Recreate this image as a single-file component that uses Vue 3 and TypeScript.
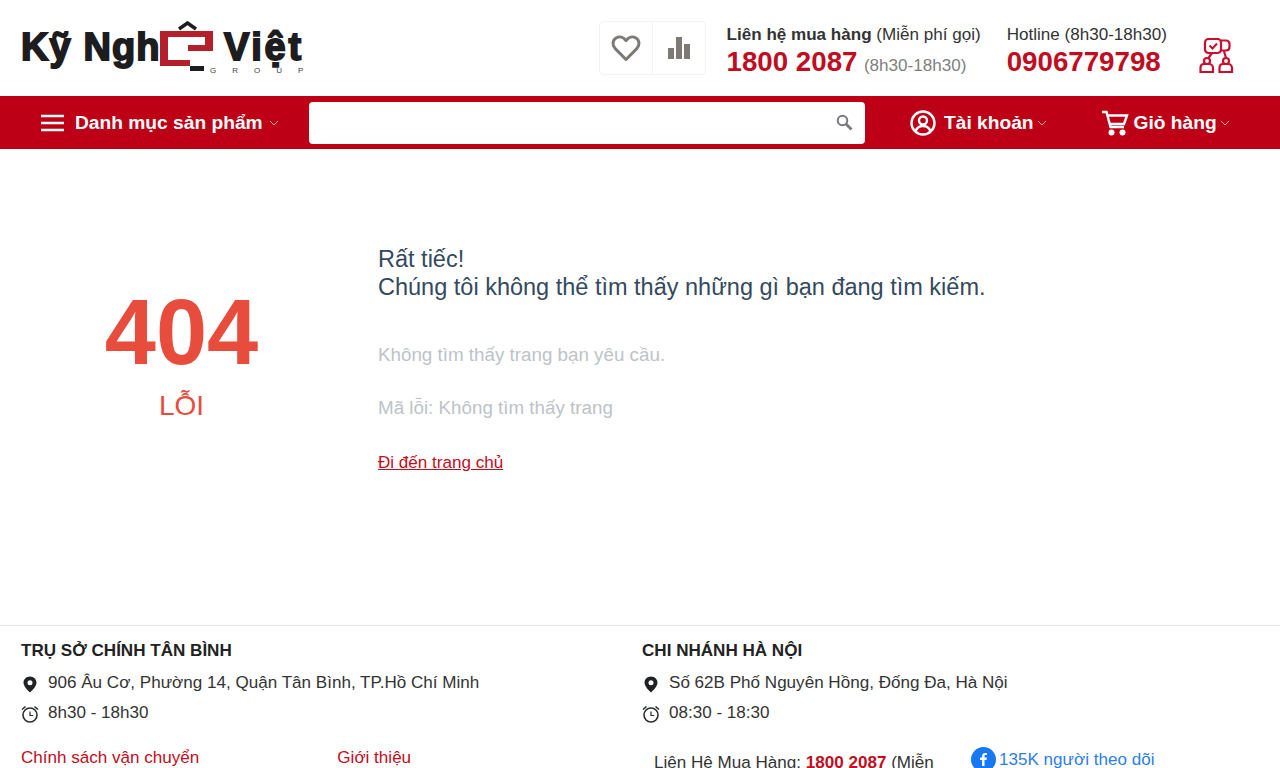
<template>
  <div class="page">
    <header class="top">
      <a class="logo" href="#">
        <span class="logo__word">Kỹ Ngh</span>
        <svg class="logo__mark" width="63" height="54" viewBox="0 0 63 54">
          <path d="M20 8 28.500 2 37 8" fill="none" stroke="#1d1d1f" stroke-width="3.500" />
          <path d="M1 10H54V30H29V24H46V16H9V39H31V45H1Z" fill="#b3202c" />
          <rect x="31" y="45" width="14" height="5" fill="#1d1d1f" />
        </svg>
        <span class="logo__side">
          <span class="logo__word logo__word--side">Việt</span>
          <span class="logo__group">GROUP</span>
        </span>
      </a>

      <div class="top__right">
        <div class="tools">
          <a class="tools__btn" href="#">
            <svg width="30" height="28" viewBox="0 0 30 28">
              <path d="M15 25.500 4.200 14.600C.9 11.200 1.500 6.300 5 4 8.500 1.900 12.600 3 15 6.600 17.400 3 21.500 1.900 25 4c3.500 2.300 4.100 7.200.8 10.600Z" fill="none" stroke="#7d7a75" stroke-width="3" stroke-linejoin="round" />
            </svg>
          </a>
          <a class="tools__btn" href="#">
            <svg width="22" height="22" viewBox="0 0 22 22">
              <rect x="0" y="11" width="6" height="11" fill="#7d7a75" />
              <rect x="8" y="0" width="6" height="22" fill="#7d7a75" />
              <rect x="16" y="7" width="6" height="15" fill="#7d7a75" />
            </svg>
          </a>
        </div>

        <div class="contact contact--first">
          <div class="contact__label"><b>Liên hệ mua hàng</b> (Miễn phí gọi)</div>
          <div><a class="contact__phone" href="#">1800 2087</a> <span class="contact__hours">(8h30-18h30)</span></div>
        </div>
        <div class="contact contact--second">
          <div class="contact__label">Hotline (8h30-18h30)</div>
          <a class="contact__phone" href="#">0906779798</a>
        </div>

        <svg class="support" width="36" height="36" viewBox="0 0 36 36" fill="none" stroke="#c8102e" stroke-width="2.200">
          <path d="M22 2.500h5c2 0 3.500 1.500 3.500 3.500v3c0 2-1.500 3.500-3.500 3.500h-5" />
          <rect x="6" y="1" width="16" height="14" rx="3.500" />
          <path d="M10.500 7.500l3 3 4.500-5" stroke-width="2" />
          <circle cx="8" cy="23" r="3" />
          <circle cx="27" cy="23" r="3" />
          <path d="M1.500 34v-4c0-2.500 1.500-4 3.500-4h5c2 0 4 1.500 4 4v4ZM20.500 34v-4c0-2.500 1.500-4 3.500-4h5c2 0 4 1.500 4 4v4Z" />
          <path d="M13 15l-3.500 5M25 13l2 7" />
        </svg>
      </div>
    </header>

    <nav class="nav">
      <a class="nav__item nav__menu" href="#">
        <svg width="24" height="18" viewBox="0 0 24 18"><path d="M0 2h23M0 9h23M0 16h23" stroke="#fff" stroke-width="2.600" /></svg>
        <span>Danh mục sản phẩm</span>
        <svg class="chev" width="10" height="6" viewBox="0 0 10 6"><path d="M1 1l4 4 4-4" /></svg>
      </a>

      <div class="search">
        <svg width="17" height="17" viewBox="0 0 17 17" fill="none" stroke="#77797c">
          <circle cx="6.500" cy="6.500" r="4.800" stroke-width="2" />
          <path d="M10 10l5.500 5.500" stroke-width="2.800" />
        </svg>
      </div>

      <a class="nav__item nav__account" href="#">
        <svg width="26" height="26" viewBox="0 0 26 26" fill="none" stroke="#fff" stroke-width="2.400">
          <circle cx="13" cy="13" r="11.500" />
          <circle cx="13" cy="10.500" r="4" />
          <path d="M5.500 21c1.500-3.500 4-5 7.500-5s6 1.500 7.500 5" />
        </svg>
        <span>Tài khoản</span>
        <svg class="chev" width="10" height="6" viewBox="0 0 10 6"><path d="M1 1l4 4 4-4" /></svg>
      </a>

      <a class="nav__item nav__cart" href="#">
        <svg width="28" height="26" viewBox="0 0 28 26" fill="none" stroke="#fff" stroke-width="2.400">
          <path d="M1 2h4.500l4 15h13.500" />
          <path d="M6.500 5.500H26l-3 8.500H9" />
          <circle cx="10.500" cy="22.500" r="1.800" fill="#fff" />
          <circle cx="21.500" cy="22.500" r="1.800" fill="#fff" />
        </svg>
        <span>Giỏ hàng</span>
        <svg class="chev" width="10" height="6" viewBox="0 0 10 6"><path d="M1 1l4 4 4-4" /></svg>
      </a>
    </nav>

    <main class="error">
      <div class="error__code">
        <strong>404</strong>
        <span>LỖI</span>
      </div>
      <div class="error__body">
        <h1>Rất tiếc!<br />Chúng tôi không thể tìm thấy những gì bạn đang tìm kiếm.</h1>
        <p>Không tìm thấy trang bạn yêu cầu.</p>
        <p>Mã lỗi: Không tìm thấy trang</p>
        <a href="#">Đi đến trang chủ</a>
      </div>
    </main>

    <footer class="foot">
      <section v-for="office in offices" :key="office.title" class="office">
        <h3>{{ office.title }}</h3>
        <div class="office__row">
          <svg width="18" height="18" viewBox="0 0 18 18">
            <path fill-rule="evenodd" d="M9 1.500C5.400 1.500 2.500 4.300 2.500 7.800 2.500 12 9 17.500 9 17.500S15.500 12 15.500 7.800C15.500 4.300 12.600 1.500 9 1.500ZM9 5.300A2.500 2.500 0 1 1 9 10.300 2.500 2.500 0 0 1 9 5.300Z" fill="#1f2326" />
          </svg>
          <span>{{ office.address }}</span>
        </div>
        <div class="office__row">
          <svg class="clock" width="18" height="18" viewBox="0 0 18 18" fill="none" stroke="#2a2e31" stroke-width="1.600">
            <circle cx="9" cy="10" r="7" />
            <path d="M9 6.500V10.500H12.200" stroke-width="1.200" />
            <path d="M1 4.500 4.500 1.500M17 4.500 13.500 1.500" />
          </svg>
          <span>{{ office.hours }}</span>
        </div>
      </section>

      <section class="foot__links">
        <a href="#">Chính sách vận chuyển</a>
        <a href="#">Giới thiệu</a>
      </section>

      <section class="foot__extra">
        <div class="foot__call">Liên Hệ Mua Hàng: <b>1800 2087</b> (Miễn</div>
        <a class="foot__fb" href="#">
          <svg width="25" height="25" viewBox="0 0 25 25">
            <circle cx="12.500" cy="12.500" r="12.500" fill="#1877f2" />
            <path d="M13.500 19v-6h2l.4-2.400h-2.400V9.300c0-.8.3-1.200 1.200-1.200h1.200V6c-.5-.1-1.100-.1-1.700-.1-1.900 0-3.100 1.100-3.100 3.100v1.600H9V13h2.100v6Z" fill="#fff" />
          </svg>
          <span>135K người theo dõi</span>
        </a>
      </section>
    </footer>
  </div>
</template>

<script setup lang="ts">
type Office = {
  title: string
  address: string
  hours: string
}

const offices: Office[] = [
  {
    title: 'TRỤ SỞ CHÍNH TÂN BÌNH',
    address: '906 Âu Cơ, Phường 14, Quận Tân Bình, TP.Hồ Chí Minh',
    hours: '8h30 - 18h30',
  },
  {
    title: 'CHI NHÁNH HÀ NỘI',
    address: 'Số 62B Phố Nguyên Hồng, Đống Đa, Hà Nội',
    hours: '08:30 - 18:30',
  },
]
</script>

<style>
html,
body {
  margin: 0;
  background: #fff;
}
</style>

<style scoped>
.page {
  height: 768px;
  overflow: hidden;
  color: #333;
  font-family: 'Liberation Sans', Arial, sans-serif;
}

a {
  text-decoration: none;
}

.top {
  display: flex;
  align-items: center;
  justify-content: space-between;
  height: 96px;
  padding: 0 45px 0 21px;
}

.logo {
  display: flex;
  align-items: flex-start;
  height: 54px;
  color: #1d1d1f;
}

.logo__word {
  display: block;
  width: 138px;
  margin-top: 4px;
  font-size: 38px;
  font-weight: 700;
  line-height: 44px;
  letter-spacing: 1.100px;
  white-space: nowrap;
  -webkit-text-stroke: 1.800px #1d1d1f;
}

.logo__word--side {
  width: 80px;
  letter-spacing: 2.700px;
}

.logo__mark {
  flex: none;
}

.logo__side {
  display: block;
  margin-left: 2px;
}

.logo__group {
  display: block;
  margin-top: -3px;
  margin-left: -14px;
  color: #444;
  font-size: 8px;
  line-height: 10px;
  letter-spacing: 16px;
  white-space: nowrap;
}

.top__right {
  display: flex;
  align-items: center;
}

.tools {
  display: flex;
  margin-right: 21px;
  border: 1px solid #f3f3f3;
  border-radius: 4px;
}

.tools__btn {
  display: flex;
  align-items: center;
  justify-content: center;
  width: 52px;
  height: 52px;
}

.tools__btn + .tools__btn {
  border-left: 1px solid #f3f3f3;
}

.contact {
  margin-top: 6px;
}

.contact--second {
  margin-left: 26px;
}

.contact__label {
  color: #333;
  font-size: 17.070px;
  line-height: 22px;
}

.contact__phone {
  color: #c00d22;
  font-size: 27.700px;
  font-weight: 700;
  line-height: 32px;
}

.contact__hours {
  margin-left: 2px;
  color: #808080;
  font-size: 17.070px;
}

.support {
  margin: 16px 0 0 32px;
}

.nav {
  display: flex;
  align-items: center;
  height: 53px;
  padding-left: 41px;
  background: #be0016;
}

.nav__item {
  display: flex;
  align-items: center;
  color: #fff;
  font-size: 19.200px;
  font-weight: 700;
  white-space: nowrap;
}

.nav__menu {
  width: 268px;
}

.nav__menu span {
  margin: 0 6px 0 10px;
}

.chev {
  fill: none;
  stroke: rgba(255, 255, 255, 0.65);
}

.search {
  display: flex;
  align-items: center;
  justify-content: flex-end;
  box-sizing: border-box;
  width: 556px;
  height: 42px;
  padding-right: 12px;
  border-radius: 4px;
  background: #fff;
}

.nav__account {
  margin-left: 45px;
}

.nav__account span {
  margin: 0 3px 0 8px;
}

.nav__cart {
  margin-left: 54px;
}

.nav__cart span {
  margin: 0 3px 0 5px;
}

.error {
  display: grid;
  grid-template-columns: 363px 1fr;
  height: 476px;
  box-sizing: border-box;
}

.error__code {
  display: flex;
  flex-direction: column;
  align-items: center;
  padding-top: 128px;
  color: #e74c3c;
}

.error__code strong {
  font-size: 92px;
  line-height: 110px;
}

.error__code span {
  margin-top: 1px;
  font-size: 28px;
  line-height: 36px;
}

.error__body {
  padding: 96px 0 0 15px;
}

.error__body h1 {
  margin: 0 0 43px;
  color: #34495e;
  font-size: 23.500px;
  font-weight: 400;
  line-height: 28px;
}

.error__body p {
  margin: 0 0 31px;
  color: #bdc3c7;
  font-size: 18.800px;
  line-height: 22px;
}

.error__body a {
  display: block;
  margin-top: 32px;
  color: #c00d22;
  font-size: 17.070px;
  line-height: 24px;
  text-decoration: underline;
}

.foot {
  display: grid;
  grid-template-columns: 621px 1fr;
  box-sizing: border-box;
  height: 143px;
  padding: 15px 21px 0;
  border-top: 1px solid #e5e5e5;
  color: #333;
  font-size: 17.070px;
}

.office h3 {
  margin: 0 0 11px;
  color: #222;
  font-size: 17.070px;
  line-height: 20px;
}

.office__row {
  display: flex;
  align-items: flex-start;
  gap: 9px;
  height: 30px;
  font-size: 17.070px;
  line-height: 22px;
}

.office__row svg {
  flex: none;
  margin-top: 3px;
}

.foot__links {
  display: flex;
  gap: 138px;
  margin-top: 15px;
  line-height: 22px;
}

.foot__links a {
  color: #c00d22;
}

.foot__extra {
  display: flex;
  gap: 37px;
  margin-top: 9px;
  padding-left: 12px;
}

.foot__call {
  width: 280px;
  margin-top: 11px;
  line-height: 22px;
  white-space: nowrap;
}

.foot__call b {
  color: #c00d22;
}

.foot__fb {
  display: flex;
  align-items: center;
  gap: 3px;
  height: 25px;
  margin-top: 6px;
  color: #2d7ee7;
}
</style>
